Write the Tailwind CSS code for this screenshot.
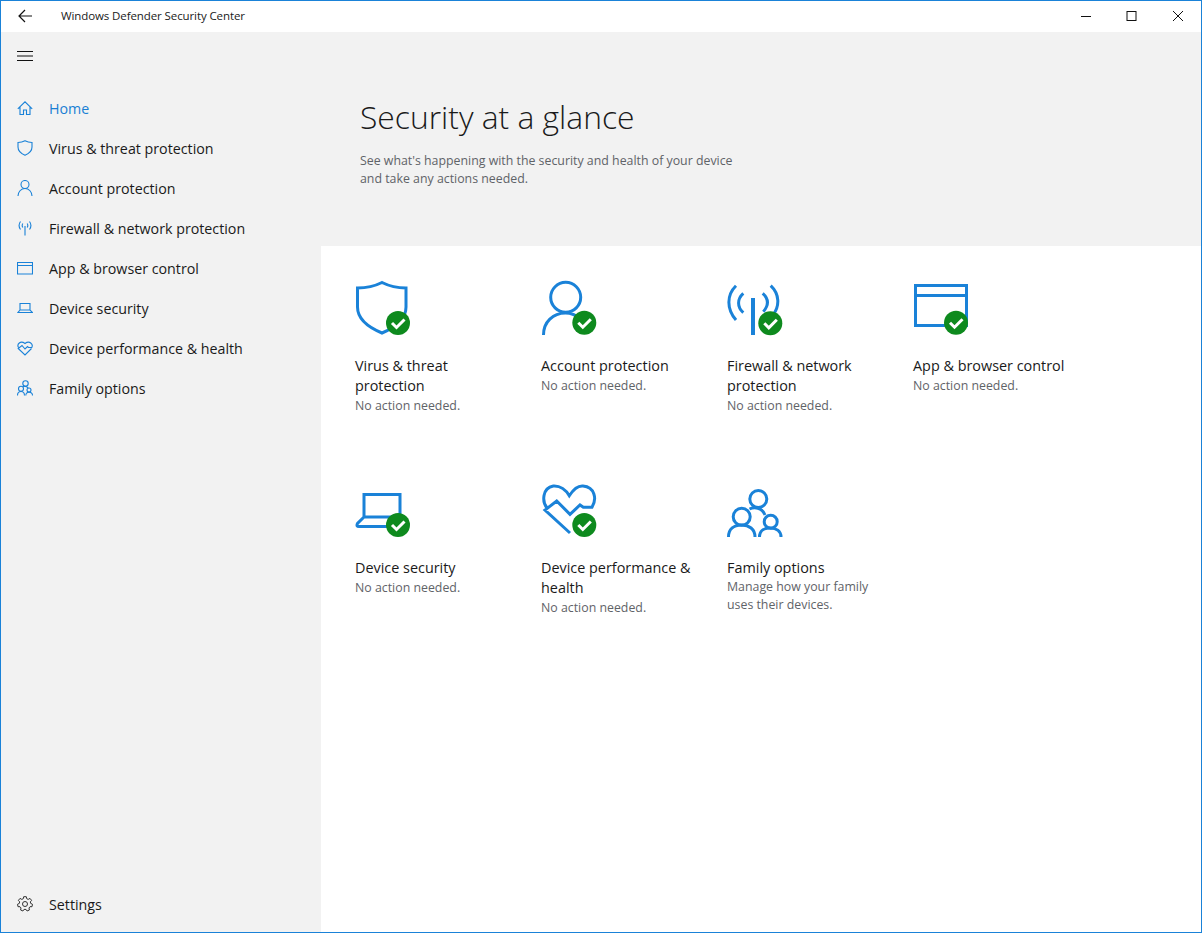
<!DOCTYPE html>
<html lang="en">

<head>
    <title>Windows Defender Security Center</title>
    <script src="https://cdn.jsdelivr.net/npm/@tailwindcss/browser@4"></script>
</head>

<body class="bg-white">
    <div class="w-[1202px] h-[933px] border border-[#1a82d8] flex flex-col bg-white text-[#1a1a1a] font-['Open_Sans',sans-serif] overflow-hidden">
        <!-- title bar -->
        <div class="h-[31px] pb-[2px] flex items-center shrink-0">
            <svg class="ml-[17px] w-[14px] h-[14px]" viewBox="0 0 14 14" fill="none" stroke="#111" stroke-width="1.2"><path d="M1 7H14M7 1L1 7L7 13" /></svg>
            <span class="ml-[29px] text-[11.5px] tracking-[-0.1px]">Windows Defender Security Center</span>
            <div class="ml-auto flex items-center">
                <svg class="w-[46px] h-[14px]" viewBox="0 0 46 14" fill="none" stroke="#111"><path d="M18 7.500H28" /></svg>
                <svg class="w-[46px] h-[14px]" viewBox="0 0 46 14" fill="none" stroke="#111"><rect x="18" y="2.500" width="9" height="9" /></svg>
                <svg class="w-[46px] h-[14px]" viewBox="0 0 46 14" fill="none" stroke="#111"><path d="M18 2L28 12M28 2L18 12" /></svg>
            </div>
        </div>
        <div class="flex-1 flex min-h-0">
            <!-- sidebar -->
            <aside class="w-[320px] bg-[#f2f2f2] flex flex-col pb-2 text-[14.25px] leading-[23px]">
                <div class="h-12 flex items-center pl-4 shrink-0">
                    <svg class="w-4 h-4" viewBox="0 0 16 16" fill="none" stroke="#111"><path d="M0 3.500H16M0 8H16M0 12.500H16" /></svg>
                </div>
                <nav class="mt-2 flex flex-col">
                    <a class="h-10 flex items-center gap-4 pl-4 text-[#1a7fd4]">
                        <svg class="w-4 h-4 shrink-0" viewBox="0 0 16 16" fill="none" stroke="#1a82d8" stroke-width="1.1"><path d="M.8 8.800L8 1.800L15.200 8.800M3 7V14.500H6.500V10H9.500V14.500H13V7" /></svg>
                        Home
                    </a>
                    <a class="h-10 flex items-center gap-4 pl-4">
                        <svg class="w-4 h-4 shrink-0" viewBox="0 0 16 16" fill="none" stroke="#1a82d8" stroke-width="1.1"><path d="M1 2.500C3.500 2.500 6 1.900 8 .8C10 1.900 12.500 2.500 15 2.500V7C15 11 11.500 13.800 8 15.200C4.500 13.800 1 11 1 7Z" /></svg>
                        Virus &amp; threat protection
                    </a>
                    <a class="h-10 flex items-center gap-4 pl-4">
                        <svg class="w-4 h-4 shrink-0" viewBox="0 0 16 16" fill="none" stroke="#1a82d8" stroke-width="1.1"><circle cx="8" cy="4.500" r="4" /><path d="M1 16C1 12 4 8.500 8 8.500C12 8.500 15 12 15 16" /></svg>
                        Account protection
                    </a>
                    <a class="h-10 flex items-center gap-4 pl-4">
                        <svg class="w-4 h-4 shrink-0" viewBox="0 0 16 16" fill="none" stroke="#1a82d8" stroke-width="1.1"><path d="M8 6V15.500M3.500 1.500C1.700 4 1.700 7 3.500 9.500M12.500 1.500C14.300 4 14.300 7 12.500 9.500M5.800 3.500C5 4.800 5 6.200 5.800 7.500M10.200 3.500C11 4.800 11 6.200 10.200 7.500" /></svg>
                        Firewall &amp; network protection
                    </a>
                    <a class="h-10 flex items-center gap-4 pl-4">
                        <svg class="w-4 h-4 shrink-0" viewBox="0 0 16 16" fill="none" stroke="#1a82d8" stroke-width="1.1"><path d="M.5 2.500H15.500V14H.5ZM.5 5.500H15.500" /></svg>
                        App &amp; browser control
                    </a>
                    <a class="h-10 flex items-center gap-4 pl-4">
                        <svg class="w-4 h-4 shrink-0" viewBox="0 0 16 16" fill="none" stroke="#1a82d8" stroke-width="1.1"><path d="M3 10V3.500H13V10M3 10H13L15.500 12.500H1Z" /></svg>
                        Device security
                    </a>
                    <a class="h-10 flex items-center gap-4 pl-4">
                        <svg class="w-4 h-4 shrink-0" viewBox="0 0 16 16" fill="none" stroke="#1a82d8" stroke-width="1.1"><path d="M1.500 7.500C-.5 4 3.500 .2 8 3.500C12.500 .2 16.500 4 14.800 7.500H11.500L10.500 6.500L8 9L5 5.500L1.200 8.500L8 15L14.500 8.500" /></svg>
                        Device performance &amp; health
                    </a>
                    <a class="h-10 flex items-center gap-4 pl-4">
                        <svg class="w-4 h-4 shrink-0" viewBox="0 0 16 16" fill="none" stroke="#1a82d8" stroke-width="1.1"><circle cx="8.500" cy="3.500" r="2.700" /><circle cx="4" cy="8.800" r="2.500" /><circle cx="12" cy="10" r="2" /><path d="M.5 15.500C.5 13 2 11.500 4 11.500C6 11.500 7.500 13 7.500 15.500M8.800 15.500C8.800 13.500 10 12.200 12 12.200C14 12.200 15.500 13.500 15.500 15.500M6 6.800C7 6 10 6 11.200 8.200" /></svg>
                        Family options
                    </a>
                </nav>
                <a class="mt-auto h-10 flex items-center gap-4 pl-4">
                    <svg class="w-4 h-4 shrink-0" viewBox="0 0 16 16" fill="none" stroke="#333" stroke-width="1"><circle cx="8" cy="8" r="2.500" /><path d="M6.700 .7H9.300L9.700 2.700L11.200 3.400L13 2.400L14.600 4.400L13.300 5.900L13.700 7.400L15.500 8.300L15 10.700L13 10.700L12 12L12.400 14L10.100 15L9 13.400H7L5.900 15L3.600 14L4 12L3 10.700L1 10.700L.5 8.300L2.300 7.400L2.700 5.900L1.400 4.400L3 2.400L4.800 3.400L6.300 2.700Z" /></svg>
                    Settings
                </a>
            </aside>
            <!-- content -->
            <main class="flex-1 flex flex-col min-w-0">
                <header class="h-[214px] bg-[#f2f2f2] pl-[39px] pt-[62px] shrink-0">
                    <h1 class="text-[31.8px] leading-[46px] font-light">Security at a glance</h1>
                    <p class="mt-[12px] text-[12.35px] leading-[18px] text-[#5f6368]">See what's happening with the security and health of your device<br>and take any actions needed.</p>
                </header>
                <section class="pl-[34px] pt-[34px] grid grid-cols-[repeat(4,186px)] auto-rows-[202px] text-[14.4px] leading-5">
                    <div>
                        <svg class="w-[60px] h-14" viewBox="0 0 60 56" fill="none" stroke="#1a82d8" stroke-width="3">
                            <path d="M2.500 8C12 8 20 6 27 2.500C34 6 42 8 51 8V27C51 40 39 48 27 53C15 48 2.500 40 2.500 27Z" />
                            <circle cx="43" cy="43" r="12" fill="#0e8a1e" stroke-width="0" />
                            <path d="M37 43L41.500 47.500L49.500 39.500" stroke="#fff" />
                        </svg>
                        <h2 class="mt-5 w-[150px]">Virus &amp; threat protection</h2>
                        <p class="text-[12.35px] text-[#5f6368]">No action needed.</p>
                    </div>
                    <div>
                        <svg class="w-[60px] h-14" viewBox="0 0 60 56" fill="none" stroke="#1a82d8" stroke-width="3">
                            <circle cx="24.700" cy="17.300" r="15" />
                            <path d="M2.500 55C2.500 42 12 33 24.500 33C30 33 35 35 40 39" />
                            <circle cx="43.300" cy="42.700" r="12" fill="#0e8a1e" stroke-width="0" />
                            <path d="M37.300 42.700L41.800 47.200L49.800 39.200" stroke="#fff" />
                        </svg>
                        <h2 class="mt-5 w-[150px]">Account protection</h2>
                        <p class="text-[12.35px] text-[#5f6368]">No action needed.</p>
                    </div>
                    <div>
                        <svg class="w-[60px] h-14" viewBox="0 0 60 56" fill="none" stroke="#1a82d8" stroke-width="3">
                            <path d="M26 18V55" stroke-width="4" />
                            <path d="M9 5.700C-.5 15 -.5 29 9 40M16.300 13.300C10 19 10 27 16.300 32.700M43.700 5.700C52.500 14 53 26 46 35M35.700 13.300C42 19 42 25 36.300 31.700" />
                            <circle cx="43.300" cy="43.300" r="12" fill="#0e8a1e" stroke-width="0" />
                            <path d="M37.300 43.300L41.800 47.800L49.800 39.800" stroke="#fff" />
                        </svg>
                        <h2 class="mt-5 w-[150px]">Firewall &amp; network protection</h2>
                        <p class="text-[12.35px] text-[#5f6368]">No action needed.</p>
                    </div>
                    <div>
                        <svg class="w-[60px] h-14" viewBox="0 0 60 56" fill="none" stroke="#1a82d8" stroke-width="3">
                            <path d="M2.500 5.500H53.500V45.500H2.500ZM2.500 15.500H53.500" />
                            <circle cx="43" cy="42.700" r="12" fill="#0e8a1e" stroke-width="0" />
                            <path d="M37 42.700L41.500 47.200L49.500 39.200" stroke="#fff" />
                        </svg>
                        <h2 class="mt-5 whitespace-nowrap">App &amp; browser control</h2>
                        <p class="text-[12.35px] text-[#5f6368]">No action needed.</p>
                    </div>
                    <div>
                        <svg class="w-[60px] h-14" viewBox="0 0 60 56" fill="none" stroke="#1a82d8" stroke-width="3">
                            <path d="M9 35V12.500H45V35M9 35H45M9 35L2.500 41.500Q1 44.500 4 44.500H34" />
                            <circle cx="43" cy="43" r="12" fill="#0e8a1e" stroke-width="0" />
                            <path d="M37 43L41.500 47.500L49.500 39.500" stroke="#fff" />
                        </svg>
                        <h2 class="mt-5 w-[150px]">Device security</h2>
                        <p class="text-[12.35px] text-[#5f6368]">No action needed.</p>
                    </div>
                    <div>
                        <svg class="w-[60px] h-14" viewBox="0 0 60 56" fill="none" stroke="#1a82d8" stroke-width="3">
                            <path d="M6 26C1 20 1 6 12.300 4C19 3.500 25 8 28.300 13.700C32 8 37 3.500 42 4C54 5 56 17 51 25.300H42.300L39 23L29 32.300L15.700 19L4 28L29 51" />
                            <circle cx="43.300" cy="43" r="12" fill="#0e8a1e" stroke-width="0" />
                            <path d="M37.300 43L41.800 47.500L49.800 39.500" stroke="#fff" />
                        </svg>
                        <h2 class="mt-5 w-[160px]">Device performance &amp; health</h2>
                        <p class="text-[12.35px] text-[#5f6368]">No action needed.</p>
                    </div>
                    <div>
                        <svg class="w-[60px] h-14" viewBox="0 0 60 56" fill="none" stroke="#1a82d8" stroke-width="3">
                            <circle cx="31.300" cy="17" r="8.500" />
                            <circle cx="14.700" cy="34.700" r="8.500" />
                            <circle cx="43.700" cy="39.700" r="6.500" />
                            <path d="M1.500 55C1.500 47 7 43 14.700 43C22 43 28 47 28 55M32.500 55C32.500 49 37 46 43 46C49 46 54 49 54 55M22.500 27C27 25 35 25 38 33" />
                        </svg>
                        <h2 class="mt-5 w-[150px]">Family options</h2>
                        <p class="text-[12.35px] leading-[18px] text-[#5f6368]">Manage how your family<br>uses their devices.</p>
                    </div>
                </section>
            </main>
        </div>
    </div>
</body>

</html>
